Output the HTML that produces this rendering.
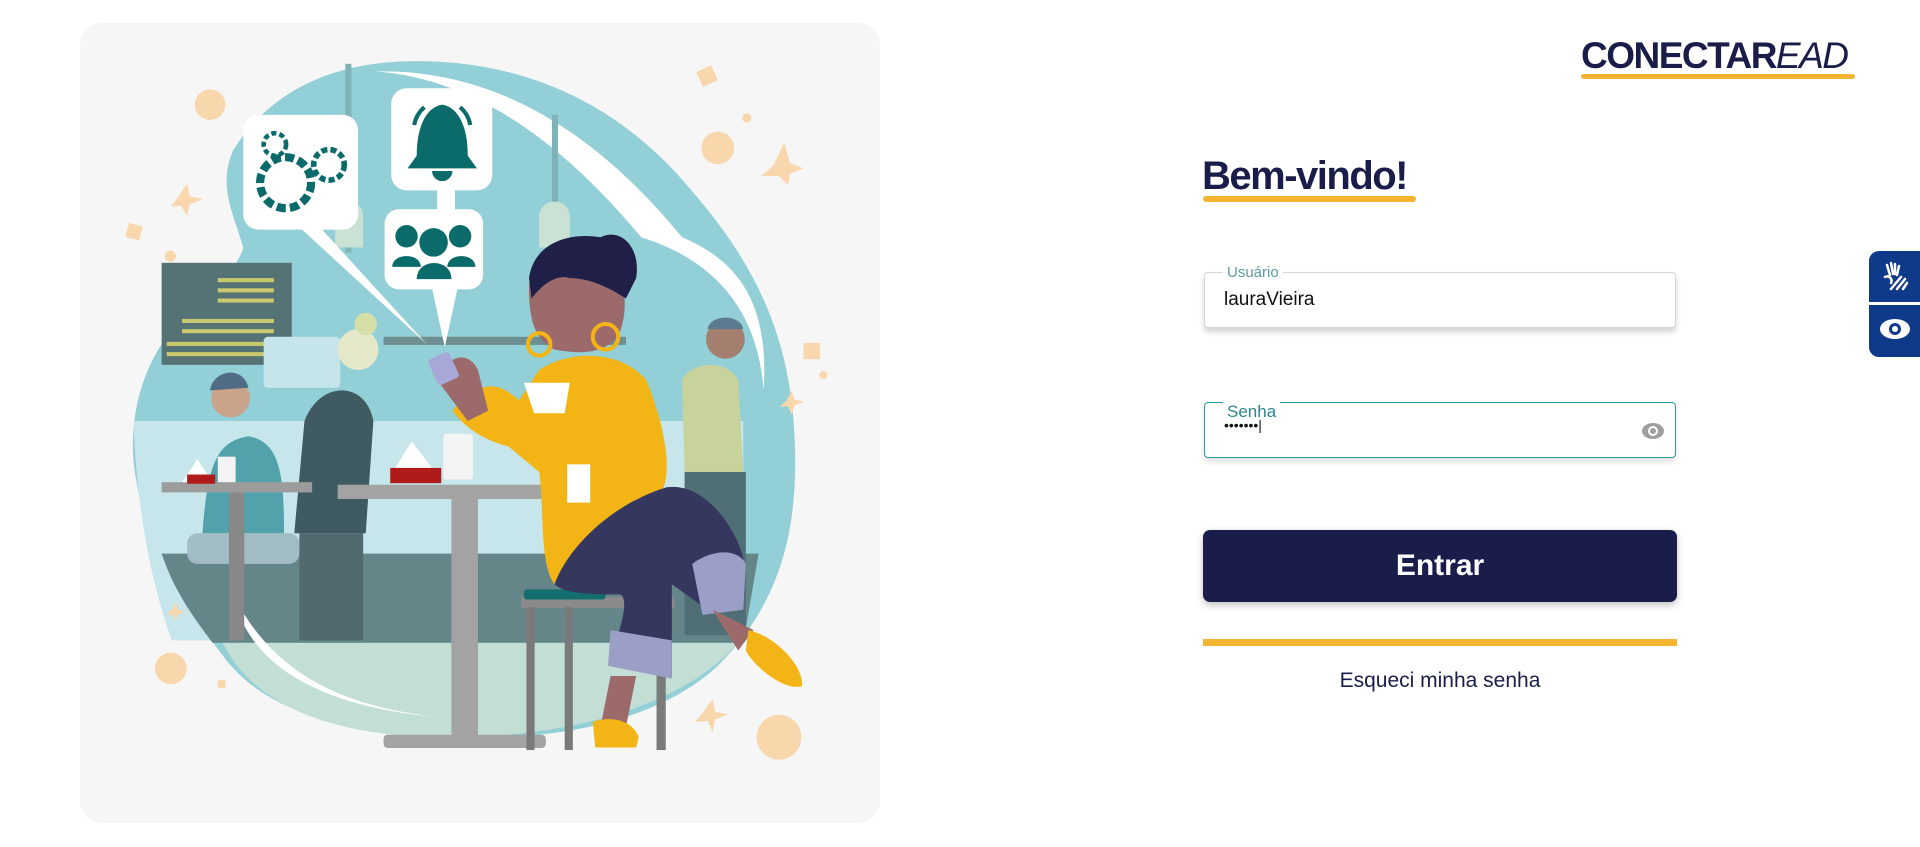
<!DOCTYPE html>
<html><head><meta charset="utf-8"><style>
*{margin:0;padding:0;box-sizing:border-box}
body{width:1920px;height:847px;background:#fff;font-family:"Liberation Sans",sans-serif;position:relative;overflow:hidden}
.card{position:absolute;left:80px;top:23px;width:800px;height:800px;background:#f6f6f6;border-radius:22px;overflow:hidden}
.logo{position:absolute;left:1581px;top:35px;font-size:37px;color:#1a1d4a;letter-spacing:-1.5px;white-space:nowrap}
.logo b{font-weight:700}.logo i{font-weight:400}
.logo .u{position:absolute;left:0;top:39px;width:274px;height:5px;background:#f5b430;border-radius:3px}
h1{position:absolute;left:1202px;top:154px;font-size:40px;color:#1a1d4a;font-weight:700;letter-spacing:-1.5px}
.hu{position:absolute;left:1203px;top:196px;width:213px;height:6px;background:#f5b430;border-radius:3px}
.field{position:absolute;left:1204px;width:472px;height:56px;background:#fff;border-radius:4px}
.f1{top:272px;border:1px solid #d6d6d6;box-shadow:0 4px 6px rgba(0,0,0,.18)}
.f2{top:402px;border:1px solid #2a9aa5;box-shadow:0 4px 6px rgba(0,0,0,.12)}
.lab{position:absolute;left:18px;top:-9px;background:#fff;padding:0 4px;font-size:15px;color:#5f9ba0}
.f2 .lab{top:-1px;font-size:17px;color:#2d8590}
.val{position:absolute;left:19px;top:16px;font-size:19px;color:#111}
.btn{position:absolute;left:1203px;top:530px;width:474px;height:72px;background:#1a1d4a;border-radius:7px;color:#fff;font-size:30px;font-weight:700;text-align:center;line-height:72px;box-shadow:0 3px 8px rgba(0,0,0,.25)}
.yl{position:absolute;left:1203px;top:639px;width:474px;height:7px;background:#f5b430}
.forgot{position:absolute;left:1203px;top:669px;width:474px;text-align:center;font-size:21px;color:#1a1d4a}
.side{position:absolute;left:1869px;top:251px;width:51px;height:106px;background:#0f3a8a;border-radius:10px 0 0 10px}
.side .sep{position:absolute;left:0;top:51px;width:51px;height:3px;background:#fff}
</style></head><body>
<div class="card">
<svg width="800" height="800" viewBox="0 0 1568 1568">
<path d="M300,250 C380,120 520,70 680,75 C880,80 1060,160 1200,330 C1330,480 1390,620 1400,800 C1410,980 1380,1130 1250,1260 C1120,1380 900,1410 700,1400 C520,1390 360,1350 280,1240 C190,1120 120,1000 105,860 C95,740 140,640 200,580 C260,520 310,480 320,440 C300,370 270,320 300,250Z" fill="#93cfd6"/>
<path d="M105,780 L1300,780 L1300,1210 L180,1210 C140,1100 110,950 105,780Z" fill="#c6e6eb"/>
<path d="M160,1040 L1330,1040 L1300,1215 L260,1215 C210,1150 180,1100 160,1040Z" fill="#658689"/>
<path d="M280,1215 L1290,1215 C1200,1320 1000,1400 720,1400 C500,1400 340,1340 280,1215Z" fill="#c3ded5"/>
<path d="M580,95 C800,90 1000,200 1180,420 C1300,470 1350,560 1340,720 C1330,580 1260,470 1100,420 C950,240 780,110 580,95Z" fill="#fff"/>
<path d="M300,1120 C330,1260 470,1340 700,1360 C520,1340 380,1280 300,1120Z" fill="#fff"/>
<rect x="160" y="470" width="255" height="200" fill="#557275"/>
<g fill="#c9c86e"><rect x="270" y="500" width="110" height="8"/><rect x="270" y="520" width="110" height="8"/><rect x="270" y="540" width="110" height="8"/><rect x="200" y="580" width="180" height="8"/><rect x="200" y="600" width="180" height="8"/><rect x="170" y="625" width="210" height="8"/><rect x="170" y="645" width="210" height="8"/></g>
<rect x="360" y="615" width="150" height="100" rx="8" fill="#c5e5ea"/>
<rect x="595" y="615" width="475" height="16" fill="#6e8f92"/>
<rect x="520" y="80" width="12" height="370" fill="#7fb3b8"/>
<rect x="925" y="180" width="12" height="220" fill="#7fb3b8"/>
<path d="M900,440 L900,380 C900,340 960,340 960,380 L960,440Z" fill="#c9e2d4"/>
<path d="M500,440 L500,380 C500,340 555,340 555,380 L555,440Z" fill="#c9e2d4"/>
<path d="M240,1000 C250,860 270,820 330,810 C390,820 400,880 400,1000Z" fill="#52a2ab"/>
<circle cx="295" cy="735" r="38" fill="#c9a48a"/><path d="M255,720 C260,680 320,670 330,715Z" fill="#4f6b85"/>
<rect x="210" y="1000" width="220" height="60" rx="20" fill="#a1bcc4"/>
<path d="M420,1000 L440,780 C470,700 560,700 575,780 L560,1000Z" fill="#3f5a60"/>
<rect x="430" y="1000" width="125" height="210" fill="#52696f"/>
<circle cx="545" cy="640" r="40" fill="#e6e9c9"/><circle cx="560" cy="590" r="22" fill="#d6dfa8"/>
<path d="M1180,700 C1200,660 1270,660 1290,700 L1300,880 L1185,880Z" fill="#c7d39b"/>
<rect x="1185" y="880" width="120" height="320" fill="#506e75"/>
<circle cx="1265" cy="620" r="38" fill="#a47e6e"/><path d="M1230,600 C1235,570 1295,570 1300,600Z" fill="#5c7a90"/>
<rect x="160" y="900" width="295" height="20" fill="#9c9c9c"/><rect x="292" y="920" width="30" height="290" fill="#888"/>
<path d="M200,900 L230,855 L260,900Z" fill="#fff"/><rect x="210" y="885" width="55" height="18" fill="#b11a1a"/>
<rect x="270" y="850" width="35" height="50" fill="#f3f3f3"/>
<rect x="505" y="905" width="500" height="28" fill="#a3a3a3"/>
<rect x="728" y="933" width="52" height="465" fill="#a3a3a3"/>
<rect x="595" y="1395" width="318" height="26" rx="8" fill="#a3a3a3"/>
<path d="M610,885 L650,820 L700,885Z" fill="#fff"/><rect x="608" y="872" width="100" height="30" fill="#b11a1a"/>
<rect x="712" y="805" width="58" height="90" rx="6" fill="#f4f4f4"/>
<rect x="865" y="1125" width="300" height="22" fill="#8a8a8a"/>
<rect x="875" y="1145" width="16" height="280" fill="#7a7a7a"/><rect x="950" y="1145" width="16" height="280" fill="#7a7a7a"/><rect x="1130" y="1145" width="18" height="280" fill="#7a7a7a"/>
<rect x="870" y="1110" width="160" height="20" rx="6" fill="#146e6e"/>
<path d="M730,760 C780,700 820,700 860,740 L900,680 C960,640 1060,640 1110,700 C1150,800 1160,880 1140,920 L1000,1000 L930,1100 C900,1060 910,950 900,880 L840,830 C800,820 760,800 730,760Z" fill="#f3b516"/>
<path d="M930,1100 C960,1020 1050,940 1150,910 C1230,900 1290,1000 1300,1050 C1310,1100 1280,1160 1230,1150 L1160,1100 L1160,1280 L1040,1260 C1050,1200 1080,1140 1060,1120 C1010,1120 950,1120 930,1100Z" fill="#35375f"/>
<path d="M1200,1060 C1240,1030 1290,1030 1305,1060 L1300,1150 L1220,1160Z" fill="#9b9fc8"/>
<path d="M1040,1190 L1160,1210 L1160,1285 L1035,1260Z" fill="#9b9fc8"/>
<path d="M1040,1280 L1090,1280 L1070,1380 L1020,1380Z" fill="#9c6a6a"/>
<path d="M1005,1370 C1030,1360 1080,1360 1095,1400 L1090,1420 L1010,1420Z" fill="#f3b516"/>
<path d="M1240,1150 L1320,1190 L1290,1230Z" fill="#9c6a6a"/>
<path d="M1310,1190 C1360,1200 1420,1260 1415,1300 C1380,1310 1320,1260 1305,1230Z" fill="#f3b516"/>
<path d="M880,520 C880,460 950,420 1010,440 C1060,460 1080,540 1060,600 C1040,650 980,650 930,640 C890,620 880,580 880,520Z" fill="#9c6a6a"/>
<path d="M880,500 C890,430 960,410 1020,420 C1060,400 1100,440 1090,500 L1070,540 C1040,520 1000,500 960,500 C930,490 900,520 885,540Z" fill="#1f1f47"/>
<circle cx="1030" cy="615" r="25" fill="none" stroke="#f3b516" stroke-width="8"/>
<circle cx="900" cy="630" r="22" fill="none" stroke="#f3b516" stroke-width="8"/>
<path d="M700,700 C720,650 760,640 780,680 L800,760 L760,780Z" fill="#9c6a6a"/>
<rect x="690" y="650" width="45" height="55" rx="6" fill="#a8a8d8" transform="rotate(-25 712 677)"/>
<path d="M870,705 L960,705 L950,765 L890,765Z" fill="#fff"/>
<rect x="955" y="865" width="45" height="75" fill="#fff"/>
<path d="M430,400 L680,630 L470,400Z" fill="#fff"/>
<path d="M690,520 L715,635 L740,520Z" fill="#fff"/>
<rect x="700" y="320" width="35" height="60" fill="#fff"/>
<rect x="320" y="180" width="225" height="225" rx="30" fill="#fff"/>
<rect x="610" y="128" width="198" height="200" rx="30" fill="#fff"/>
<rect x="597" y="365" width="193" height="157" rx="28" fill="#fff"/>
<g fill="none" stroke="#0b6b6b"><circle cx="403" cy="313" r="50" stroke-width="16" stroke-dasharray="18 8"/><circle cx="488" cy="278" r="30" stroke-width="11" stroke-dasharray="12 6"/><circle cx="382" cy="238" r="22" stroke-width="9" stroke-dasharray="10 6"/></g>
<path d="M660,260 C660,200 680,165 710,160 C740,165 760,200 760,260 L778,285 L642,285Z M690,290 A20,20 0 0 0 730,290Z" fill="#0b6b6b"/>
<path d="M655,200 A60,60 0 0 1 675,165 M765,200 A60,60 0 0 0 745,165" stroke="#0b6b6b" stroke-width="8" fill="none"/>
<g fill="#0b6b6b"><circle cx="640" cy="418" r="22"/><circle cx="745" cy="418" r="22"/><path d="M612,478 C612,450 668,450 668,478Z M720,478 C720,450 775,450 775,478Z"/><circle cx="693" cy="430" r="28"/><path d="M660,502 C660,460 728,460 728,502Z"/></g>
<g fill="#f7d7ab"><circle cx="255" cy="160" r="30"/><circle cx="1250" cy="245" r="32"/><circle cx="178" cy="1265" r="31"/><circle cx="1370" cy="1400" r="44"/><circle cx="1307" cy="186" r="9"/><circle cx="177" cy="457" r="11"/><circle cx="1457" cy="690" r="8"/>
<rect x="1418" y="627" width="32" height="32"/><rect x="1213" y="88" width="32" height="32" transform="rotate(-25 1229 104)"/><rect x="92" y="395" width="28" height="28" transform="rotate(15 106 409)"/><rect x="270" y="1288" width="15" height="15"/>
<path d="M1380,235 L1392,275 L1418,285 L1392,295 L1388,318 L1370,300 L1335,300 L1360,278Z"/><path d="M210,315 L215,340 L242,345 L215,355 L210,378 L198,358 L178,360 L192,342Z"/><path d="M1240,1325 L1245,1350 L1270,1355 L1245,1365 L1240,1390 L1230,1368 L1205,1370 L1222,1350Z"/><path d="M1395,720 L1400,738 L1418,742 L1400,750 L1395,768 L1388,752 L1372,752 L1385,740Z"/><path d="M188,1135 L192,1150 L205,1153 L192,1160 L188,1172 L182,1160 L170,1160 L180,1150Z"/></g>
</svg>
</div>
<div class="logo"><b>CONECTAR</b><i>EAD</i><div class="u"></div></div>
<h1>Bem-vindo!</h1><div class="hu"></div>
<div class="field f1"><span class="lab">Usuário</span><span class="val">lauraVieira</span></div>
<div class="field f2"><span class="lab">Senha</span><span class="val" style="top:14px;font-size:14px">•••••••|</span>
<svg style="position:absolute;right:10px;top:18px" width="24" height="20" viewBox="0 0 24 20"><ellipse cx="12" cy="10" rx="11" ry="8" fill="#9e9e9e"/><circle cx="12" cy="10" r="5" fill="#fff"/><circle cx="12" cy="10" r="3" fill="#9e9e9e"/></svg></div>
<div class="btn">Entrar</div>
<div class="yl"></div>
<div class="forgot">Esqueci minha senha</div>
<div class="side"><div class="sep"></div>
<svg style="position:absolute;left:12px;top:10px" width="28" height="30" viewBox="0 0 28 30" fill="none" stroke="#fff" stroke-width="2.5" stroke-linecap="round"><path d="M6,4 L9,14 M10,2 L12,13 M14,3 L14,13 M18,5 L16,14 M4,16 C8,14 12,18 10,22 M10,28 L20,16 M16,28 L24,18 M22,28 L26,22"/></svg>
<svg style="position:absolute;left:10px;top:66px" width="32" height="24" viewBox="0 0 32 24"><ellipse cx="16" cy="12" rx="15" ry="10" fill="#fff"/><circle cx="16" cy="12" r="6" fill="#0f3a8a"/><circle cx="16" cy="12" r="3" fill="#fff"/></svg>
</div>
</body></html>
